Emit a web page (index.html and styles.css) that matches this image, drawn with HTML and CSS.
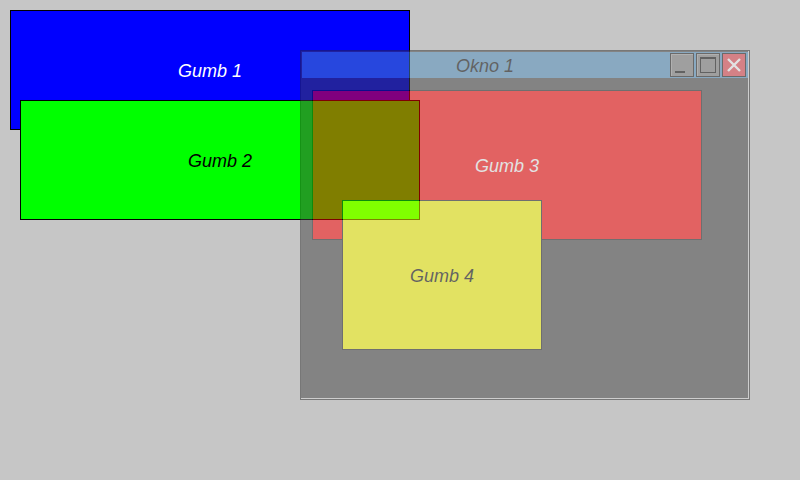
FILE: index.html
```html
<!doctype html>
<html>

<head>
  <meta charset='utf-8'>
  <title>Okno 1</title>
  <link rel="stylesheet" href="styles.css">
</head>

<body>
  <div class='desktop'>
    <div class='gumb gumb1'>Gumb 1</div>
    <div class='gumb gumb2'>Gumb 2</div>

    <div class='okno'>
      <div class='naslov'>
        <div class='naslovtext'>Okno 1</div>
        <div class='tipka tipka-min'><span class='crta'></span></div>
        <div class='tipka tipka-max'><span class='kvadrat'></span></div>
        <div class='tipka tipka-zapri'>
          <svg width='16' height='16' viewBox='0 0 16 16'>
            <path d='M2 2 L14 14 M14 2 L2 14' stroke='#fff' stroke-width='2.4' fill='none' />
          </svg>
        </div>
      </div>
      <div class='vsebina'>
        <div class='gumb gumb3'>Gumb 3</div>
        <div class='gumb gumb4'>Gumb 4</div>
      </div>
    </div>
  </div>
</body>

</html>
```

FILE: styles.css
```css
* {
  margin: 0;
  padding: 0;
  box-sizing: border-box;
}
body {
  background: #c6c6c6;
  width: 800px;
  height: 480px;
  overflow: hidden;
  font-family: "Liberation Sans", Arial, sans-serif;
}
.desktop {
  position: relative;
  width: 800px;
  height: 480px;
}
/* gumbi - prosto postavljeni na namizju */
.gumb {
  position: absolute;
  display: flex;
  align-items: center;
  justify-content: center;
  padding-top: 3px;
  font-size: 18px;
  font-style: italic;
  border: 1px solid #000;
}
.gumb1 {
  left: 10px;
  top: 10px;
  width: 400px;
  height: 120px;
  background: #0000ff;
  color: #fff;
}
.gumb2 {
  left: 20px;
  top: 100px;
  width: 400px;
  height: 120px;
  background: #00ff00;
  color: #000;
}
/* okno */
.okno {
  position: absolute;
  left: 300px;
  top: 50px;
  width: 450px;
  height: 350px;
  background: #424242;
  border: 1px solid #2a2a2a;
  box-shadow: inset -1px -1px 0 #d4d4d4;
  padding: 1px;
  opacity: 0.5;
  display: flex;
  flex-direction: column;
}
.naslov {
  height: 26px;
  background: #4e8ebe;
  display: flex;
  align-items: center;
  gap: 2px;
  padding: 1px 2px 1px 0;
}
.naslovtext {
  flex: 1;
  text-align: center;
  padding-top: 3px;
  font-size: 18px;
  font-style: italic;
  color: #000;
}
.tipka {
  width: 24px;
  height: 24px;
  border: 1px solid #101010;
  background: #7a7a7a;
  box-shadow: inset 1px 1px 0 #9c9c9c;
  display: flex;
  align-items: center;
  justify-content: center;
  position: relative;
}
.crta {
  position: absolute;
  left: 4px;
  bottom: 3px;
  width: 10px;
  height: 2px;
  background: #000;
}
.kvadrat {
  width: 16px;
  height: 16px;
  border: 1px solid #000;
  border-top-width: 2px;
}
.tipka-zapri {
  background: #e23e48;
  box-shadow: none;
}
.vsebina {
  flex: 1;
  position: relative;
}
.gumb3 {
  left: 10px;
  top: 12px;
  width: 390px;
  height: 150px;
  background: #ff0000;
  color: #fff;
  border-color: #1a1a1a;
}
.gumb4 {
  left: 40px;
  top: 122px;
  width: 200px;
  height: 150px;
  background: #ffff00;
  color: #000;
  border-color: #1a1a1a;
}
```
